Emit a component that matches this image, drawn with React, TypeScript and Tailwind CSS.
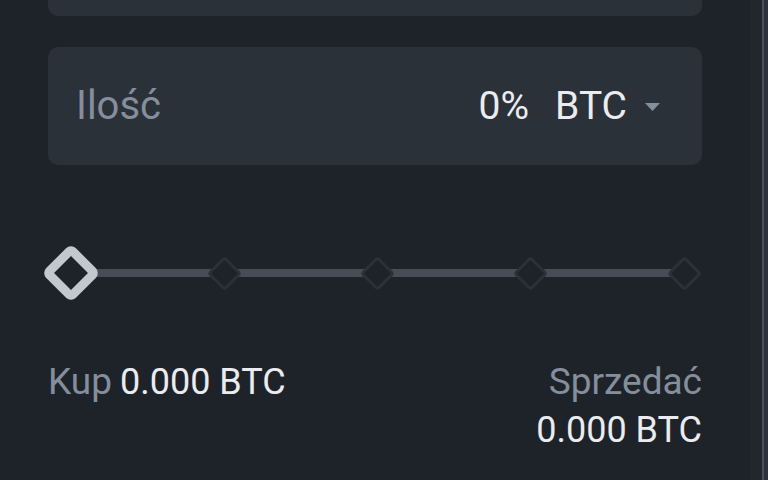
function Tick({ active }: { active?: boolean }) {
  return (
    <div className="flex h-[58px] w-[58px] items-center justify-center">
      {active ? (
        <div className="h-[42px] w-[42px] rotate-45 rounded-[7px] border-[9px] border-[#c4c8ce] bg-[#1e2329]" />
      ) : (
        <div className="h-[25px] w-[25px] rotate-45 rounded-[4px] border-[3px] border-[#2b3139] bg-[#1e2329]" />
      )}
    </div>
  );
}

export default function App() {
  return (
    <div
      className="flex h-[480px] w-[768px] overflow-hidden bg-[#1e2329]"
      style={{ fontFamily: 'Roboto, "Liberation Sans", sans-serif' }}
    >
      <div className="flex w-[750px] flex-col pl-[48px] pr-[48px]">
        {/* previous field, cut off at top */}
        <div className="h-[16px] w-[654px] rounded-b-[10px] bg-[#2b3139]" />

        {/* amount field */}
        <div className="mt-[31px] flex h-[118px] w-[654px] items-center rounded-[10px] bg-[#2b3139] pl-[28px] pr-[42px]">
          <span className="text-[40px] text-[#848e9c]">Ilość</span>
          <span className="ml-auto text-[39px] text-[#eaecef]">0%</span>
          <span className="ml-[26px] text-[39px] text-[#eaecef]">BTC</span>
          <svg className="ml-[18px] mt-[2px]" width="15" height="8" viewBox="0 0 15 8">
            <path d="M0 0h15L7.5 8z" fill="#848e9c" />
          </svg>
        </div>

        {/* slider */}
        <div className="relative -ml-[6px] mt-[79px] flex h-[58px] w-[671px] items-center justify-between">
          <div className="absolute left-[29px] right-[29px] top-[25px] h-[8px] bg-[#474d57]" />
          <div className="relative z-10 flex w-full items-center justify-between">
            <Tick active />
            <Tick />
            <Tick />
            <Tick />
            <Tick />
          </div>
        </div>

        {/* totals */}
        <div className="mt-[60px] flex w-[654px] justify-between">
          <div className="flex h-[40px] items-center gap-[8px]">
            <span className="text-[37px] text-[#848e9c]">Kup</span>
            <span className="text-[36px] text-[#eaecef]">0.000 BTC</span>
          </div>
          <div className="flex flex-col items-end">
            <span className="flex h-[40px] items-center text-[37px] text-[#848e9c]">Sprzedać</span>
            <span className="mt-[8px] flex h-[40px] items-center text-[36px] text-[#eaecef]">0.000 BTC</span>
          </div>
        </div>
      </div>
      <div className="w-[12px] bg-[#22262d]" />
      <div className="w-[2px] bg-[#4a505a]" />
      <div className="flex-1 bg-[#2b3139]" />
    </div>
  );
}
